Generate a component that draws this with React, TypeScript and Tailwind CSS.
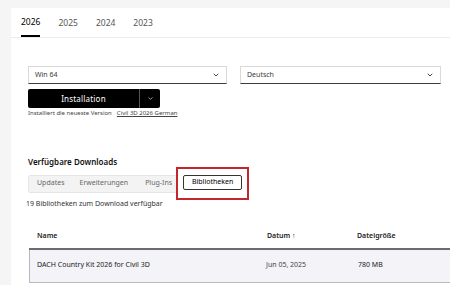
import { ChevronDown } from "lucide-react";

const years = ["2026", "2025", "2024", "2023"];
const groups = ["Updates", "Erweiterungen", "Plug-Ins"];

function Select({ label, width }: { label: string; width: string }) {
  return (
    <div
      className={`${width} h-[18px] flex items-center justify-between px-[6px] border border-[#d9d9d9] border-b-[#3c3c3c] bg-white`}
    >
      <span className="text-[7px] text-[#3c3c3c]">{label}</span>
      <ChevronDown className="w-[8px] h-[8px] text-[#222]" strokeWidth={2.5} />
    </div>
  );
}

export default function App() {
  return (
    <div
      className="w-[450px] h-[285px] overflow-hidden bg-[#f5f5f5] pt-[8px] pl-[11px]"
      style={{ fontFamily: '"Noto Sans", Arial, sans-serif' }}
    >
      <div className="bg-white h-full">
        {/* Year tabs */}
        <div className="flex gap-[18px] pl-[10px] h-[30px] border-b border-[#ececec]">
          {years.map((y, i) => (
            <div
              key={y}
              className={`flex items-center text-[8.5px] pt-[2px] ${
                i === 0 ? "text-black border-b-2 border-black" : "text-[#555]"
              }`}
            >
              {y}
            </div>
          ))}
        </div>

        <div className="pl-[17px]">
          {/* Selects */}
          <div className="flex gap-[13px] mt-[28px]">
            <Select label="Win 64" width="w-[199px]" />
            <Select label="Deutsch" width="w-[201px]" />
          </div>

          {/* Install button */}
          <div className="flex w-[132px] h-[19px] mt-[5px] bg-black rounded-[2px] text-white">
            <div className="flex-1 flex items-center justify-center text-[8px] tracking-[0.2px]">
              Installation
            </div>
            <div className="w-[21px] flex items-center justify-center border-l border-[#555]">
              <ChevronDown className="w-[7px] h-[7px]" strokeWidth={2} />
            </div>
          </div>
          <div className="mt-[1px] text-[6px] text-[#444] flex gap-[5px]">
            <span>Installiert die neueste Version</span>
            <span className="underline">Civil 3D 2026 German</span>
          </div>

          {/* Downloads */}
          <div className="mt-[38px] text-[8px] font-semibold text-[#111]">Verfügbare Downloads</div>
          <div className="flex items-center mt-[-1px]">
            <div className="flex items-center h-[18px] bg-[#f3f3f3] border border-[#e6e6e6] rounded-[2px] text-[7px] text-[#666]">
              <span className="pl-[8px]">{groups[0]}</span>
              <span className="pl-[15px]">{groups[1]}</span>
              <span className="pl-[17px] pr-[8px]">{groups[2]}</span>
            </div>
            <div className="relative ml-[-5px] border-2 border-[#c4262e] bg-white px-[5px] pt-[6px] pb-[8px]">
              <div className="h-[15px] w-[59px] flex items-center justify-center bg-white border border-[#333] rounded-[2px] text-[7px] text-black">
                Bibliotheken
              </div>
            </div>
          </div>
          <div className="mt-[-1px] ml-[-2px] text-[7px] text-[#333]">19 Bibliotheken zum Download verfügbar</div>

          {/* Table */}
          <div className="mt-[15px] ml-[1px]">
            <div className="flex h-[25px] items-center border-b-2 border-[#6b6b73] text-[7px] font-semibold text-[#222]">
              <span className="pl-[8px] w-[238px]">Name</span>
              <span className="w-[90px]">Datum ↑</span>
              <span>Dateigröße</span>
            </div>
            <div className="flex h-[33px] items-center bg-[#f3f3f8] border-l border-b border-[#b8b8c0] text-[7px] text-[#222]">
              <span className="pl-[7px] w-[236px]">DACH Country Kit 2026 for Civil 3D</span>
              <span className="w-[92px] text-[#444]">Jun 05, 2025</span>
              <span>780 MB</span>
            </div>
          </div>
        </div>
      </div>
    </div>
  );
}
